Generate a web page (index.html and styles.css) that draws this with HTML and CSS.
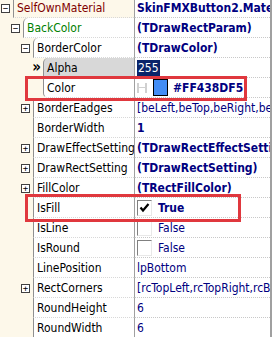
FILE: index.html
```html
<!DOCTYPE html>
<html lang="en">
<head>
    <meta charset="UTF-8">
    <title>Object Inspector</title>
    <link rel="stylesheet" href="styles.css">
</head>
<body>
    <div class="inspector">
        <div class="row">
            <div class="gutter" style="width: 13px"><span class="box">&minus;</span></div>
            <div class="name lvl0 first">SelfOwnMaterial</div>
            <div class="value bold">SkinFMXButton2.Material</div>
        </div>
        <div class="row">
            <div class="gutter" style="width: 23px"><span class="box">&minus;</span></div>
            <div class="name lvl1 step">BackColor</div>
            <div class="value bold">(TDrawRectParam)</div>
        </div>
        <div class="row">
            <div class="gutter" style="width: 33px"><span class="box">&minus;</span></div>
            <div class="name step">BorderColor</div>
            <div class="value bold">(TDrawColor)</div>
        </div>
        <div class="row">
            <div class="gutter" style="width: 43px"><span class="arrow">&raquo;</span></div>
            <div class="name selected step">Alpha</div>
            <div class="value"><span class="edit">255</span></div>
        </div>
        <div class="row">
            <div class="gutter" style="width: 43px"></div>
            <div class="name stepback">Color</div>
            <div class="value bold">
                <span class="dots"></span>
                <span class="swatch"></span>
                #FF438DF5
            </div>
        </div>
        <div class="row">
            <div class="gutter" style="width: 33px"><span class="box">+</span></div>
            <div class="name">BorderEadges</div>
            <div class="value">[beLeft,beTop,beRight,beBottom]</div>
        </div>
        <div class="row">
            <div class="gutter" style="width: 33px"></div>
            <div class="name">BorderWidth</div>
            <div class="value bold">1</div>
        </div>
        <div class="row">
            <div class="gutter" style="width: 33px"><span class="box">+</span></div>
            <div class="name">DrawEffectSetting</div>
            <div class="value bold">(TDrawRectEffectSetting)</div>
        </div>
        <div class="row">
            <div class="gutter" style="width: 33px"><span class="box">+</span></div>
            <div class="name">DrawRectSetting</div>
            <div class="value bold">(TDrawRectSetting)</div>
        </div>
        <div class="row">
            <div class="gutter" style="width: 33px"><span class="box">+</span></div>
            <div class="name">FillColor</div>
            <div class="value bold">(TRectFillColor)</div>
        </div>
        <div class="row">
            <div class="gutter" style="width: 33px"></div>
            <div class="name">IsFill</div>
            <div class="value bold">
                <span class="check">
                    <svg width="11" height="11" viewBox="0 0 11 11"><path d="M1.5 5.5 L4 8.5 L9.5 2" fill="none" stroke="#000" stroke-width="2.2"/></svg>
                </span>True
            </div>
        </div>
        <div class="row">
            <div class="gutter" style="width: 33px"></div>
            <div class="name">IsLine</div>
            <div class="value"><span class="check"></span>False</div>
        </div>
        <div class="row">
            <div class="gutter" style="width: 33px"></div>
            <div class="name">IsRound</div>
            <div class="value"><span class="check"></span>False</div>
        </div>
        <div class="row">
            <div class="gutter" style="width: 33px"></div>
            <div class="name">LinePosition</div>
            <div class="value">lpBottom</div>
        </div>
        <div class="row">
            <div class="gutter" style="width: 33px"><span class="box">+</span></div>
            <div class="name">RectCorners</div>
            <div class="value">[rcTopLeft,rcTopRight,rcBottomLeft]</div>
        </div>
        <div class="row">
            <div class="gutter" style="width: 33px"></div>
            <div class="name">RoundHeight</div>
            <div class="value">6</div>
        </div>
        <div class="row">
            <div class="gutter" style="width: 33px"></div>
            <div class="name">RoundWidth</div>
            <div class="value">6</div>
        </div>

        <div class="mark mark-color"></div>
        <div class="mark mark-fill"></div>
    </div>
</body>
</html>
```

FILE: styles.css
```css
body {
    margin: 0;
    padding: 0;
    background-color: #fdf8ea;
    font-family: "DejaVu Sans Condensed", "DejaVu Sans", sans-serif;
    font-size: 12px;
}

.inspector {
    position: relative;
    width: 270px;
    height: 339px;
    margin-top: -2px;
    border-right: 2px solid #a0a0a0;
    overflow: hidden;
}

.row {
    display: flex;
    height: 20px;
    line-height: 20px;
}

.gutter {
    position: relative;
    flex: none;
    background-color: #fdf8ea;
}

.gutter .box {
    position: absolute;
    right: 3px;
    top: 6px;
    width: 7px;
    height: 7px;
    border: 1px solid #404040;
    background: #fff;
    font-family: "DejaVu Sans Mono", monospace;
    font-size: 9px;
    line-height: 7px;
    text-align: center;
    color: #000;
}

.gutter .arrow {
    position: absolute;
    right: 2px;
    top: -1px;
    font-weight: bold;
    font-size: 15px;
}

.name {
    flex: none;
    box-sizing: border-box;
    padding-left: 3px;
    border-left: 1px solid #909090;
    border-bottom: 1px dotted #d8d8d8;
    background-color: #fff;
    white-space: nowrap;
    overflow: hidden;
}

.row:nth-child(1) .name { width: 121px; }
.row:nth-child(2) .name { width: 111px; }
.row:nth-child(3) .name { width: 101px; }
.row:nth-child(4) .name, .row:nth-child(5) .name { width: 91px; }
.row:nth-child(n+6) .name { width: 101px; }

.first { background-color: #fdf8ea; }
.step { border-top-left-radius: 5px; }
.stepback { border-bottom-left-radius: 5px; }

.lvl0 { color: #800000; }
.lvl1 { color: #008000; }

.selected { background-color: #d8d8d8; }

.value {
    flex: 1;
    display: flex;
    align-items: center;
    padding-left: 2px;
    border-left: 1px solid #a0a0a0;
    border-bottom: 1px dotted #c8c8c8;
    background-color: #fff;
    color: #000080;
    white-space: nowrap;
    overflow: hidden;
}

.bold { font-weight: bold; }

.edit {
    background-color: #0a246a;
    color: #fff;
    line-height: 16px;
    padding: 0 1px;
}

.dots {
    width: 10px;
    height: 10px;
    margin-right: 6px;
    border-left: 2px solid #d0d0d0;
    border-right: 2px solid #d0d0d0;
    box-sizing: border-box;
    background: linear-gradient(#d0d0d0, #d0d0d0) center / 100% 1px no-repeat;
}

.swatch {
    width: 13px;
    height: 15px;
    margin-right: 5px;
    border: 1px solid #000;
    background-color: #438df5;
}

.check {
    display: flex;
    align-items: center;
    justify-content: center;
    width: 13px;
    height: 14px;
    margin-right: 6px;
    border: 1px solid #808080;
    border-right-color: #e8e8e8;
    border-bottom-color: #e8e8e8;
    background-color: #fff;
}

.mark {
    position: absolute;
    border: 3px solid #e0383e;
}

.mark-color {
    left: 25px;
    top: 78px;
    width: 216px;
    height: 19px;
}

.mark-fill {
    left: 25px;
    top: 196px;
    width: 210px;
    height: 22px;
}
```
